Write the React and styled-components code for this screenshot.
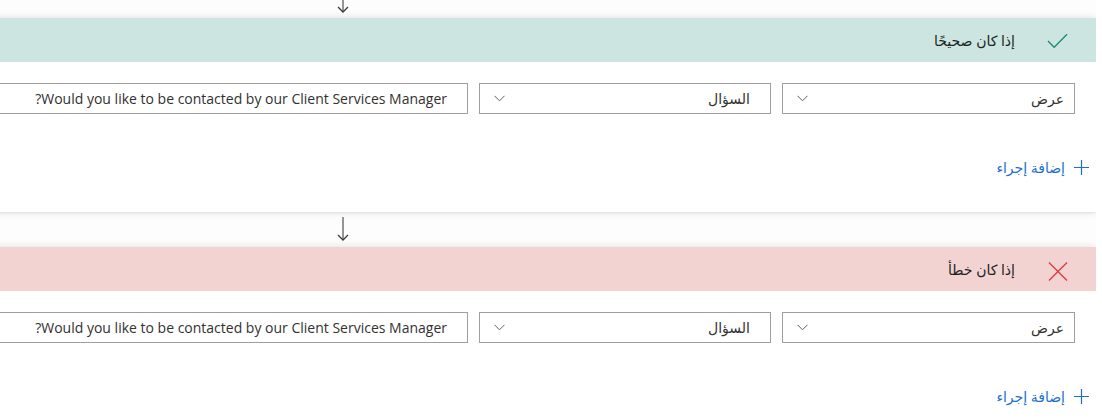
import React from "react";
import styled, { createGlobalStyle } from "styled-components";

const Global = createGlobalStyle`
  html, body { margin: 0; padding: 0; background: #ffffff; }
  body { font-family: "Segoe UI", "Open Sans", "DejaVu Sans", sans-serif; color: #323130; }
`;

const Viewport = styled.div`
  width: 1096px;
  height: 419px;
  overflow: hidden;
  direction: rtl;
  background: #fdfdfd;
`;

const Flow = styled.div`
  width: 1506px;
  margin-top: -16px;
  display: flex;
  flex-direction: column;
`;

const Connector = styled.div`
  height: ${(p) => p.$h}px;
  display: flex;
  justify-content: center;
  align-items: flex-start;
  padding-top: 5px;
  box-sizing: border-box;
`;

const Card = styled.section`
  background: #ffffff;
  box-shadow: 0 0 8px rgba(0, 0, 0, 0.12), 0 1px 2px rgba(0, 0, 0, 0.06);
  height: 194px;
  display: flex;
  flex-direction: column;
`;

const Header = styled.div`
  height: 44px;
  background: ${(p) => p.$bg};
  display: flex;
  align-items: center;
  padding-right: 28px;
  gap: 32px;
`;

const IconBox = styled.span`
  width: 21px;
  display: flex;
  justify-content: center;
  align-items: center;
  margin-top: ${(p) => p.$dy || 0}px;
`;

const Title = styled.span`
  font-size: 14px;
  font-weight: 400;
  color: #201f1e;
`;

const Body = styled.div`
  padding: 21px 21px 0 0;
  display: flex;
  flex-direction: column;
`;

const Row = styled.div`
  display: flex;
  gap: 11px;
`;

const Field = styled.div`
  width: ${(p) => p.$w}px;
  height: 31px;
  box-sizing: border-box;
  border: 1px solid #a19f9d;
  background: #fff;
  display: flex;
  align-items: center;
  justify-content: space-between;
  padding: 0 ${(p) => p.$pr}px 0 14px;
  font-size: 14px;
  color: #323130;
  flex-shrink: 0;
`;

const FieldText = styled.span`
  white-space: nowrap;
`;

const ActionBar = styled.div`
  margin-top: 37px;
  padding-right: 7px;
  display: flex;
`;

const AddButton = styled.button`
  height: 32px;
  border: 0;
  background: transparent;
  display: flex;
  align-items: center;
  gap: 9px;
  padding: 0;
  font-family: inherit;
  font-size: 14px;
  color: #1a6ed0;
  cursor: pointer;
`;

const Arrow = () => (
  <svg width="14" height="24" viewBox="0 0 14 24">
    <path d="M7 0 V23" stroke="#605e5c" strokeWidth="1.3" fill="none" />
    <path d="M2 18 L7 23 L12 18" stroke="#3b3a39" strokeWidth="1.3" fill="none" />
  </svg>
);

const Check = () => (
  <svg width="22" height="16" viewBox="0 0 22 16">
    <path d="M1 8 L7.5 14.5 L21 1" stroke="#1f8a78" strokeWidth="1.4" fill="none" />
  </svg>
);

const Cross = () => (
  <svg width="20" height="19" viewBox="0 0 20 19">
    <path d="M1 0.5 L19 18.5 M19 0.5 L1 18.5" stroke="#d83b3b" strokeWidth="1.3" fill="none" />
  </svg>
);

const Chevron = () => (
  <svg width="11" height="7" viewBox="0 0 11 7">
    <path d="M0.5 0.8 L5.5 5.8 L10.5 0.8" stroke="#605e5c" strokeWidth="1" fill="none" />
  </svg>
);

const Plus = () => (
  <svg width="15" height="15" viewBox="0 0 15 15">
    <path d="M7.5 0 V15 M0 7.5 H15" stroke="#1a6ed0" strokeWidth="1.2" fill="none" />
  </svg>
);

const Branch = ({ tone, icon, dy, title }) => (
  <Card>
    <Header $bg={tone}>
      <IconBox $dy={dy}>{icon}</IconBox>
      <Title>{title}</Title>
    </Header>
    <Body>
      <Row>
        <Field $w={293} $pr={10}>
          <FieldText>عرض</FieldText>
          <Chevron />
        </Field>
        <Field $w={292} $pr={20}>
          <FieldText>السؤال</FieldText>
          <Chevron />
        </Field>
        <Field $w={800} $pr={20}>
          <FieldText>Would you like to be contacted by our Client Services Manager?</FieldText>
        </Field>
      </Row>
    </Body>
    <ActionBar>
      <AddButton>
        <Plus />
        <span>إضافة إجراء</span>
      </AddButton>
    </ActionBar>
  </Card>
);

export default function App() {
  return (
    <>
      <Global />
      <Viewport>
        <Flow>
          <Connector $h={34}>
            <Arrow />
          </Connector>
          <Branch tone="#cce5e1" icon={<Check />} dy={2} title="إذا كان صحيحًا" />
          <Connector $h={35}>
            <Arrow />
          </Connector>
          <Branch tone="#f3d2d2" icon={<Cross />} dy={4} title="إذا كان خطأ" />
        </Flow>
      </Viewport>
    </>
  );
}
